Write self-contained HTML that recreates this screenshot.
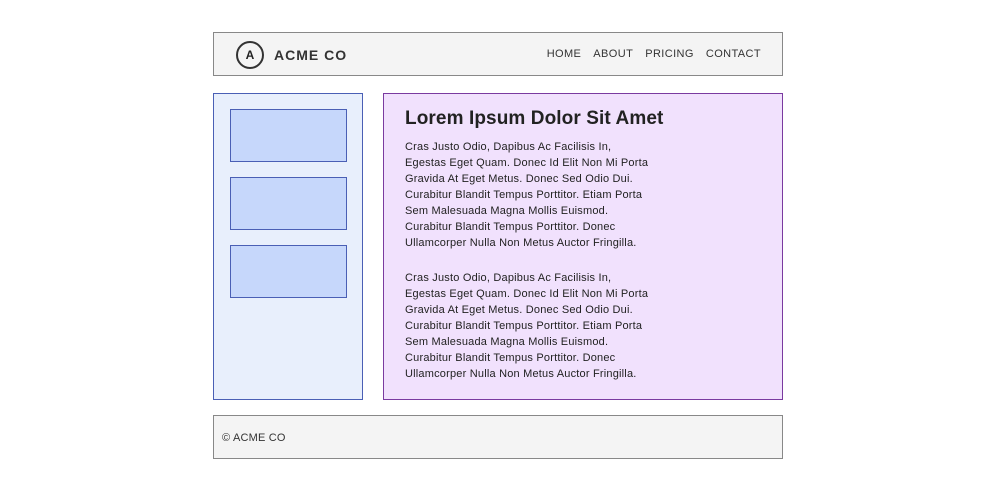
<!DOCTYPE html>
<html><head><style>
*{box-sizing:border-box;margin:0;padding:0}
body{width:1000px;height:500px;background:#fff;font-family:"Liberation Sans",sans-serif;color:#222;position:relative}
.hdr{position:absolute;left:213px;top:32px;width:570px;height:44px;background:#f4f4f4;border:1px solid #888}
.logo{position:absolute;left:22px;top:8px;width:28px;height:28px;border:2px solid #333;border-radius:50%;font-size:12px;font-weight:bold;text-align:center;line-height:24px}
.brand{position:absolute;left:60px;top:14px;font-size:14px;font-weight:bold;letter-spacing:1px;color:#333}
.nav{position:absolute;right:21px;top:15px;font-size:11px;color:#333;letter-spacing:0.4px}
.nav span{margin-left:12px}
.side{position:absolute;left:213px;top:93px;width:150px;height:307px;background:#e8effc;border:1px solid #4a5fb5}
.box{position:absolute;left:16px;width:117px;height:53px;background:#c6d7fb;border:1px solid #4a5fb5}
.main{position:absolute;left:383px;top:93px;width:400px;height:307px;background:#f1e1fd;border:1px solid #7a3aa0}
h1{position:absolute;left:21px;top:14px;font-size:19px;font-weight:bold;color:#222;letter-spacing:0.1px}
p{position:absolute;left:21px;width:300px;font-size:11px;line-height:16px;color:#222;letter-spacing:0.2px}
.ftr{position:absolute;left:213px;top:415px;width:570px;height:44px;background:#f4f4f4;border:1px solid #888;font-size:11px;line-height:44px;padding-left:8px;color:#333;letter-spacing:0.2px}
</style></head><body>
<div class="hdr"><div class="logo">A</div><div class="brand">ACME CO</div>
<div class="nav"><span>HOME</span><span>ABOUT</span><span>PRICING</span><span>CONTACT</span></div></div>
<div class="side"><div class="box" style="top:15px"></div><div class="box" style="top:83px"></div><div class="box" style="top:151px"></div></div>
<div class="main"><h1>Lorem Ipsum Dolor Sit Amet</h1>
<p style="top:45px">Cras Justo Odio, Dapibus Ac Facilisis In,<br>Egestas Eget Quam. Donec Id Elit Non Mi Porta<br>Gravida At Eget Metus. Donec Sed Odio Dui.<br>Curabitur Blandit Tempus Porttitor. Etiam Porta<br>Sem Malesuada Magna Mollis Euismod.<br>Curabitur Blandit Tempus Porttitor. Donec<br>Ullamcorper Nulla Non Metus Auctor Fringilla.</p>
<p style="top:176px">Cras Justo Odio, Dapibus Ac Facilisis In,<br>Egestas Eget Quam. Donec Id Elit Non Mi Porta<br>Gravida At Eget Metus. Donec Sed Odio Dui.<br>Curabitur Blandit Tempus Porttitor. Etiam Porta<br>Sem Malesuada Magna Mollis Euismod.<br>Curabitur Blandit Tempus Porttitor. Donec<br>Ullamcorper Nulla Non Metus Auctor Fringilla.</p></div>
<div class="ftr">© ACME CO</div>
</body></html>
